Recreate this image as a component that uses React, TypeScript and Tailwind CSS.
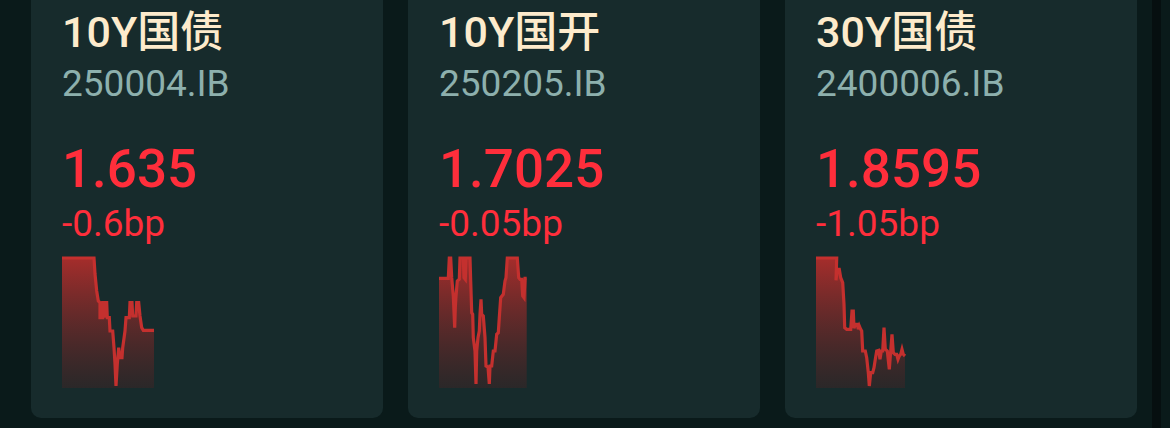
import React from 'react';

type Pt = [number, number];

const bonds: {
  name: string;
  code: string;
  yld: string;
  change: string;
  points: Pt[];
}[] = [
  {
    name: '10Y国债',
    code: '250004.IB',
    yld: '1.635',
    change: '-0.6bp',
    points: [
      [0, 0], [32, 0], [33, 16], [34.7, 33], [36.3, 43], [38, 44.7], [38, 59.7], [40.7, 59.7],
      [40.7, 44.7], [42, 44.7], [42, 59.7], [43.3, 44.7], [44.7, 44.7], [45.3, 59.7], [47.3, 59.7],
      [48, 73], [50.7, 73], [52, 89.7], [53, 106], [54, 128], [55.3, 106], [56.7, 89.7], [58, 99.7],
      [60, 99.7], [60.7, 89.7], [63, 73], [64, 59.7], [67.3, 59.7], [68, 44.7], [70, 44.7], [70.7, 58],
      [74, 58], [74.7, 44.7], [76.7, 44.7], [78, 58], [79.7, 69.7], [81.3, 72.3], [92, 72.3],
    ],
  },
  {
    name: '10Y国开',
    code: '250205.IB',
    yld: '1.7025',
    change: '-0.05bp',
    points: [
      [0, 20.3], [9.3, 20.3], [10.3, 0], [11.7, 0], [12.7, 19.7], [14.3, 38], [15.7, 69.7], [16.3, 49.7],
      [17, 38], [18.3, 23], [20.3, 21.3], [21, 0], [24.3, 0], [25, 19.7], [26.3, 21.3], [27, 0], [31, 0],
      [31.7, 23], [32.7, 54.7], [33.7, 56.3], [34.3, 79.7], [36, 93], [37, 126], [37.7, 93], [39, 79.7],
      [40.3, 73], [41, 56.3], [42, 41.3], [42.7, 56.3], [44.3, 58], [46, 79.7], [47, 108], [49, 109],
      [50.3, 126], [51, 108], [52.7, 108], [54.3, 93], [56, 93], [57.7, 76.3], [59.3, 74.7], [60.3, 59.7],
      [61.7, 39.7], [64.3, 36.3], [66, 23], [67, 19.7], [68.3, 0], [78.3, 0], [79.7, 19.7], [81, 21.3],
      [82.7, 21.3], [83.7, 38], [85, 39.7], [86, 20.3], [87.7, 20.3],
    ],
  },
  {
    name: '30Y国债',
    code: '2400006.IB',
    yld: '1.8595',
    change: '-1.05bp',
    points: [
      [0, 0], [20.7, 0], [20, 22.3], [21.3, 11.3], [23.3, 11.3], [24.7, 19.7], [26.7, 24.7], [28, 46.3],
      [28.7, 69.7], [30.7, 71.3], [34.7, 71.3], [36, 53], [37.3, 53], [38, 70.3], [39.3, 66.3], [41.3, 66.3],
      [42.3, 71.3], [43.3, 68], [44.7, 71.3], [45.7, 73], [46.7, 93], [49.3, 93], [50.7, 99.7], [52.3, 114.7],
      [53.3, 128], [54.7, 114.7], [56.7, 114.7], [58, 109.7], [59.3, 101.3], [60.7, 93], [62.7, 92.3],
      [64, 101.3], [65.3, 93], [66.7, 93], [68, 69.7], [69.3, 91.3], [71.3, 93], [73.3, 111.3], [74.7, 93],
      [76, 76.3], [77.3, 94.7], [79, 96.3], [80.7, 96.3], [82, 101.3], [83.3, 98], [84.7, 96.3], [86, 91.3],
      [87.3, 96.3], [89, 98],
    ],
  },
];

const Sparkline: React.FC<{ points: Pt[]; id: string }> = ({ points, id }) => {
  const line = points.map(([x, y]) => `${x},${y}`).join(' ');
  const last = points[points.length - 1];
  const area = `0,130 ${line} ${last[0]},130`;
  return (
    <svg width="92" height="130" viewBox="0 0 92 130" className="block overflow-visible">
      <defs>
        <linearGradient id={id} x1="0" y1="0" x2="0" y2="1">
          <stop offset="0%" stopColor="#b52d2b" stopOpacity="0.9" />
          <stop offset="100%" stopColor="#3a2526" stopOpacity="0.55" />
        </linearGradient>
      </defs>
      <polygon points={area} fill={`url(#${id})`} />
      <polyline points={line} fill="none" stroke="#c4302e" strokeWidth="3.2" strokeLinejoin="miter" />
    </svg>
  );
};

const BondCard: React.FC<(typeof bonds)[number] & { idx: number }> = (b) => (
  <div className="w-[352px] h-[418px] shrink-0 rounded-b-[10px] bg-[#172b2c] pl-[31px] pt-[6px]">
    <div className="text-[43px] leading-[52px] font-medium text-[#fdebcc]">{b.name}</div>
    <div className="mt-[3px] text-[37px] leading-[45px] text-[#8db0ad]">{b.code}</div>
    <div className="mt-[33px] text-[53px] leading-[61px] font-medium text-[#ff2e3b]">{b.yld}</div>
    <div className="mt-[1px] text-[37px] leading-[45px] text-[#ff2e3b]">{b.change}</div>
    <div className="mt-[12px]">
      <Sparkline points={b.points} id={`grad${b.idx}`} />
    </div>
  </div>
);

export default function App() {
  return (
    <div
      className="relative w-[1170px] h-[428px] overflow-hidden bg-[#0a1a1a]"
      style={{ fontFamily: 'Roboto, "Noto Sans CJK SC", sans-serif' }}
    >
      <div className="flex gap-[25px] pl-[31px]">
        {bonds.map((b, i) => (
          <BondCard key={b.code} idx={i} {...b} />
        ))}
      </div>
      <div className="absolute top-0 right-[9px] w-[9px] h-full bg-[#060f10]" />
    </div>
  );
}
